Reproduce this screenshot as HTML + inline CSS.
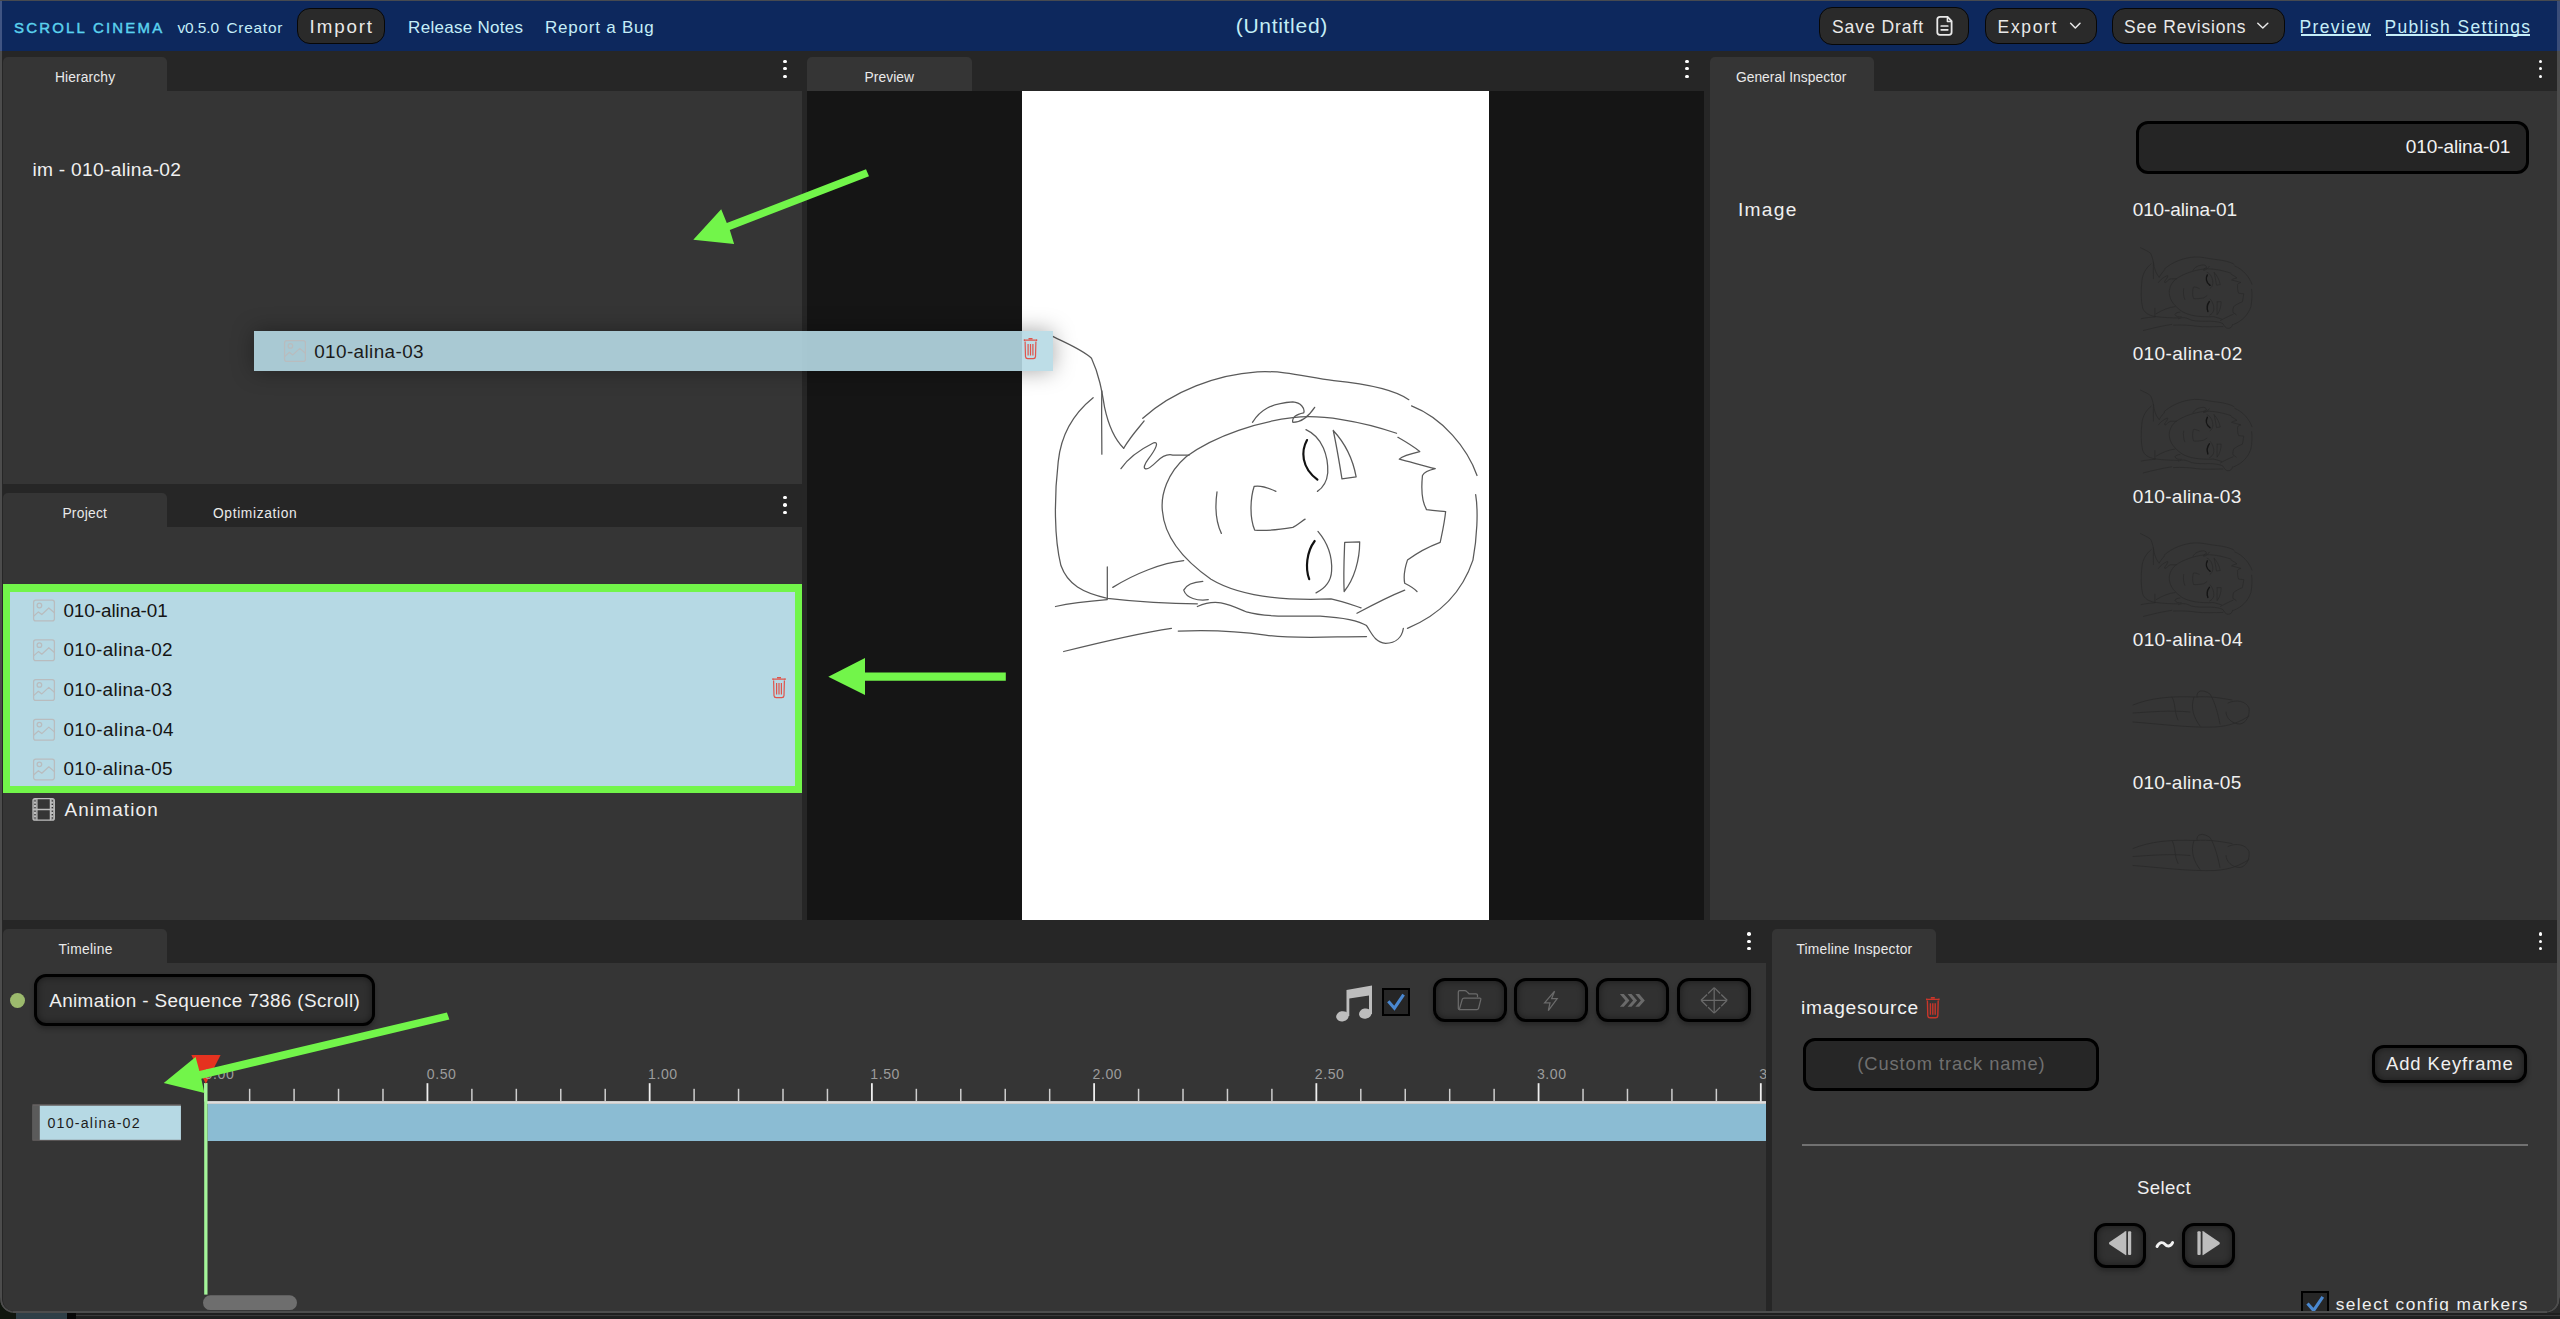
<!DOCTYPE html>
<html><head><meta charset="utf-8"><title>Scroll Cinema</title>
<style>
*{margin:0;padding:0;box-sizing:border-box}
html,body{width:2560px;height:1319px;overflow:hidden;background:#1d1d1d;font-family:"Liberation Sans",sans-serif}
.a{position:absolute}
.t{position:absolute;white-space:pre;line-height:0}
.tab{position:absolute;background:#353535;border-radius:5px 5px 0 0}
.pn{position:absolute;background:#353535}
.dot{position:absolute;width:3.6px;height:3.6px;border-radius:50%;background:#fff}
.hb{position:absolute;background:#2a2a2a;border:1.6px solid #070707;border-radius:13px}
.tb{position:absolute;background:#313131;border:3px solid #000;border-radius:12px;box-shadow:inset 0 0 7px rgba(0,0,0,.45),0 3px 5px rgba(0,0,0,.28)}
svg{position:absolute;overflow:visible}
</style></head>
<body>
<!-- desktop strip at bottom -->
<div class="a" style="left:0;top:1300px;width:2560px;height:19px;background:#202020"></div>
<div class="a" style="left:45px;top:1313px;width:2515px;height:2px;background:#3a3a3a;border-radius:10px 0 0 0"></div>
<div class="a" style="left:16px;top:1312px;width:52px;height:7px;background:#2a3a44"></div>
<div class="a" style="left:0;top:1312px;width:16px;height:7px;background:#1a2418"></div>
<!-- window -->
<div class="a" style="left:0;top:0;width:2560px;height:1312px;background:#262626;border-radius:0 0 13px 13px;border:1px solid #4c4c4c;border-left-width:2px;border-right-width:3px;border-top-color:#474a50"></div>
<!-- header -->
<div class="a" style="left:2px;top:1px;width:2555px;height:50px;background:#0d285d"></div>
<div class="a" style="left:0;top:1px;width:2px;height:50px;background:#405583"></div>
<div class="a" style="left:2557px;top:1px;width:3px;height:50px;background:#3a4d78"></div>
<div class="hb" style="left:297px;top:8px;width:88px;height:36px"></div>
<div class="hb" style="left:1819px;top:7px;width:150px;height:37.5px"></div>
<div class="hb" style="left:1984.5px;top:8.3px;width:112px;height:35.5px"></div>
<div class="hb" style="left:2112px;top:8px;width:173px;height:36px"></div>
<div class="a" style="left:2300.5px;top:34px;width:70px;height:1.6px;background:#c5eef8"></div>
<div class="a" style="left:2385.5px;top:34px;width:144.5px;height:1.6px;background:#c5eef8"></div>
<svg style="left:0;top:0" width="2560" height="51">
 <g fill="none" stroke="#e9e9e9" stroke-width="1.8" stroke-linejoin="round" stroke-linecap="round">
  <path d="M1947.6 16.9 H1940 Q1937.3 16.9 1937.3 19.6 V32.3 Q1937.3 34.8 1940 34.8 H1949 Q1951.6 34.8 1951.6 32.3 V21.1 Z"/>
  <path d="M1947.4 17.3 V21.6 H1951.3" stroke-width="1.5"/>
  <path d="M1941.2 26 H1947.8 M1941.2 29.8 H1947.8" stroke-width="1.7"/>
  <path d="M2070.6 23.3 L2075.3 28 L2080 23.3" stroke-width="1.5"/>
  <path d="M2257.8 23.3 L2262.8 28 L2267.8 23.3" stroke-width="1.5"/>
 </g>
</svg>

<!-- tabs + panels -->
<div class="tab" style="left:3px;top:57px;width:164px;height:34px"></div>
<div class="pn" style="left:3px;top:91px;width:798.5px;height:393px"></div>
<div class="tab" style="left:3px;top:493px;width:164px;height:34px"></div>
<div class="pn" style="left:3px;top:527px;width:798.5px;height:393px"></div>
<div class="tab" style="left:807px;top:57px;width:165px;height:34px"></div>
<div class="a" style="left:807px;top:91px;width:897px;height:829px;background:#151515"></div>
<div class="a" style="left:1022px;top:91px;width:467px;height:829px;background:#fff"></div>
<div class="tab" style="left:1710px;top:57px;width:164px;height:34px"></div>
<div class="pn" style="left:1710px;top:91px;width:847px;height:829px"></div>
<div class="tab" style="left:3px;top:929px;width:164px;height:34px"></div>
<div class="pn" style="left:3px;top:963px;width:1763px;height:348px;border-radius:0 0 0 11px"></div>
<div class="tab" style="left:1772px;top:929px;width:164px;height:34px"></div>
<div class="pn" style="left:1772px;top:963px;width:785px;height:348px;border-radius:0 0 11px 0"></div>

<!-- dots -->
<div class="dot" style="left:783.4px;top:59.6px"></div><div class="dot" style="left:783.4px;top:66.9px"></div><div class="dot" style="left:783.4px;top:74.5px"></div>
<div class="dot" style="left:783.4px;top:495.8px"></div><div class="dot" style="left:783.4px;top:503.2px"></div><div class="dot" style="left:783.4px;top:510.7px"></div>
<div class="dot" style="left:1685.2px;top:59.6px"></div><div class="dot" style="left:1685.2px;top:66.9px"></div><div class="dot" style="left:1685.2px;top:74.5px"></div>
<div class="dot" style="left:2538.6px;top:59.6px"></div><div class="dot" style="left:2538.6px;top:66.9px"></div><div class="dot" style="left:2538.6px;top:74.5px"></div>
<div class="dot" style="left:1747.4px;top:932.2px"></div><div class="dot" style="left:1747.4px;top:939.6px"></div><div class="dot" style="left:1747.4px;top:946.8px"></div>
<div class="dot" style="left:2538.7px;top:932.2px"></div><div class="dot" style="left:2538.7px;top:939.6px"></div><div class="dot" style="left:2538.7px;top:946.8px"></div>

<!-- preview sketch -->
<svg style="left:0;top:0" width="2560" height="1000">
 <defs>
  <g id="sk">
<path d="M1380 415 C1250 370 1100 345 1000 358 C880 372 720 420 610 500 C540 560 515 640 522 700 C530 800 600 880 700 950 C800 1010 950 1030 1140 1022 C1180 1030 1220 1045 1250 1055"/>
<path d="M450 360 C560 260 720 200 870 190 C980 185 1050 210 1150 222 C1280 235 1380 260 1425 292"/>
<path d="M1435 315 C1550 360 1640 470 1675 570"/>
<path d="M1670 640 C1680 700 1675 800 1660 880 C1620 1000 1540 1080 1420 1130"/>
<path d="M268 285 C200 340 150 420 140 520 C125 650 125 800 150 900 C175 970 230 1000 320 1020 C450 1035 560 1040 650 1040"/>
<path d="M120 60 C180 90 230 110 262 140 C290 200 300 260 310 320 C325 390 350 440 380 470"/>
<path d="M300 260 C298 340 300 420 300 492"/>
<path d="M380 470 C410 420 440 390 455 370"/>
<path d="M370 545 C400 500 450 470 490 450 C510 445 500 470 470 510 C440 550 460 560 500 520 C520 500 540 490 560 495 L620 495"/>
<path d="M130 1050 C200 1035 260 1030 320 1025"/>
<path d="M160 1215 C300 1180 420 1150 555 1130"/>
<path d="M580 1140 C700 1135 800 1140 900 1155 C1000 1170 1150 1160 1270 1160"/>
<path d="M650 1050 C720 1020 760 1040 830 1070 C900 1090 1000 1085 1100 1085 C1180 1090 1240 1100 1270 1120 C1290 1150 1300 1180 1340 1185 C1380 1185 1400 1160 1405 1130"/>
<path d="M670 958 C640 960 610 970 600 990 C610 1020 650 1030 690 1025"/>
<path d="M320 905 L320 1022"/>
<path d="M340 980 C420 930 520 890 600 882"/>
<path d="M1048 402 C1110 430 1130 500 1128 560 C1125 590 1110 615 1090 628"/>
<path d="M1148 405 C1190 450 1220 510 1232 575 L1180 582 C1170 520 1160 460 1148 405"/>
<path d="M1092 775 C1130 820 1145 870 1142 920 C1140 960 1115 985 1085 1000"/>
<path d="M1190 815 L1245 813 C1245 880 1225 950 1188 995 C1185 930 1188 870 1190 815"/>
<path d="M938 628 C910 615 880 605 858 610 C845 650 840 720 860 770 C900 775 950 768 1000 760 C1020 750 1035 735 1045 730"/>
<path d="M722 630 C715 680 718 740 738 782"/>
<path d="M852 375 C880 330 920 305 1000 300 C1030 302 1045 325 1040 340 C1010 345 995 360 1000 375 C1030 375 1060 350 1080 320"/>
<path d="M1385 430 C1420 450 1450 470 1465 482 C1430 490 1400 500 1390 510 C1430 520 1480 535 1522 545 C1500 550 1480 560 1475 570 C1470 620 1475 670 1490 695 C1520 700 1545 700 1560 702 C1555 750 1545 790 1540 815 C1500 830 1460 850 1420 880 C1410 910 1405 940 1410 965 C1430 975 1450 990 1455 995"/>
<path d="M1235 1075 C1300 1040 1360 1010 1410 990"/>
</g>
  <g id="eyes">
<path d="M1052 440 C1030 480 1030 540 1090 585"/>
<path d="M1080 810 C1050 850 1045 910 1060 950"/>
</g>
 </defs>
 <g transform="translate(1020 320) scale(0.27285)" fill="none" stroke-linecap="round" stroke-linejoin="round">
  <use href="#sk" stroke="#5a5a5a" stroke-width="4.6"/>
  <use href="#eyes" stroke="#111" stroke-width="8"/>
 </g>
</svg>
<!-- project list -->
<div class="a" style="left:3px;top:584px;width:798.5px;height:209px;background:#b6d9e4;border:7.3px solid #72f54a;border-top-width:8px"></div>
<svg style="left:0;top:0" width="810" height="830">
 <defs>
  <g id="imgic" fill="none" stroke="#b9bcbe" stroke-width="1.25">
   <rect x="0.6" y="0.6" width="20.8" height="20.8" rx="2.2"/>
   <circle cx="6.4" cy="5.9" r="2.3"/>
   <path d="M0.6 16.6 L5.4 12.3 L8.8 14.9 L15.8 8.4 L21.4 13.2" stroke-linejoin="round"/>
  </g>
  <g id="trash" fill="none" stroke="#e0544b" stroke-width="1.2">
   <path d="M0.4 2.2 H13.6 M5 0.6 H9 M0.9 1.2 V3 M13.1 1.2 V3" />
   <path d="M1.6 3.4 L2 18.6 Q2.2 20.6 4.2 20.6 H9.8 Q11.8 20.6 12 18.6 L12.4 3.4"/>
   <path d="M4.6 6 V17.6 M7 6 V17.6 M9.4 6 V17.6"/>
  </g>
 </defs>
 <use href="#imgic" x="33" y="599.6"/>
 <use href="#imgic" x="33" y="639.3"/>
 <use href="#imgic" x="33" y="679"/>
 <use href="#imgic" x="33" y="718.7"/>
 <use href="#imgic" x="33" y="758.4"/>
 <use href="#trash" x="772" y="677"/>
 <g fill="none" stroke="#bdbdbd" stroke-width="1.3">
  <rect x="33" y="798.6" width="21.3" height="21.6" rx="2"/>
  <path d="M36.9 798.6 V820.2 M50.4 798.6 V820.2 M33 809.5 H54.3"/>
 </g>
 <g fill="#bdbdbd">
  <rect x="33.6" y="799.2" width="2.7" height="20.4"/>
  <rect x="51" y="799.2" width="2.7" height="20.4"/>
 </g>
 <g fill="#353535">
  <rect x="34.3" y="800.2" width="1.4" height="1.4"/><rect x="34.3" y="803.6" width="1.4" height="1.4"/><rect x="34.3" y="807" width="1.4" height="1.4"/><rect x="34.3" y="810.5" width="1.4" height="1.4"/><rect x="34.3" y="814" width="1.4" height="1.4"/><rect x="34.3" y="817.3" width="1.4" height="1.4"/>
  <rect x="51.6" y="800.2" width="1.4" height="1.4"/><rect x="51.6" y="803.6" width="1.4" height="1.4"/><rect x="51.6" y="807" width="1.4" height="1.4"/><rect x="51.6" y="810.5" width="1.4" height="1.4"/><rect x="51.6" y="814" width="1.4" height="1.4"/><rect x="51.6" y="817.3" width="1.4" height="1.4"/>
 </g>
</svg>
<!-- hierarchy dragged item -->
<div class="a" style="left:254px;top:331px;width:798.5px;height:39.6px;background:rgba(182,217,228,.9);box-shadow:0 0 22px rgba(0,0,0,.35);z-index:30"></div>
<svg style="left:0;top:0;z-index:31" width="1060" height="380">
 <use href="#imgic" x="284" y="340"/>
 <use href="#trash" x="1023.5" y="338"/>
</svg>
<!-- general inspector -->
<div class="a" style="left:2135.5px;top:121px;width:393px;height:52.5px;background:#252525;border:3px solid #000;border-radius:12px"></div>
<svg style="left:0;top:0" width="2560" height="1000">
<g transform="translate(2131.9 243.4) scale(0.0717)" fill="none" stroke-linecap="round" stroke-linejoin="round">
  <use href="#sk" stroke="#2a2a2a" stroke-width="10.5"/>
  <use href="#eyes" stroke="#151515" stroke-width="20"/>
 </g>
<g transform="translate(2131.9 385.8) scale(0.0717)" fill="none" stroke-linecap="round" stroke-linejoin="round">
  <use href="#sk" stroke="#2a2a2a" stroke-width="10.5"/>
  <use href="#eyes" stroke="#151515" stroke-width="20"/>
 </g>
<g transform="translate(2131.9 529.3) scale(0.0717)" fill="none" stroke-linecap="round" stroke-linejoin="round">
  <use href="#sk" stroke="#2a2a2a" stroke-width="10.5"/>
  <use href="#eyes" stroke="#151515" stroke-width="20"/>
 </g>
<g fill="none" stroke="#2a2a2a" stroke-width="0.9" stroke-linecap="round">
  <path d="M2133 705 C2150 698 2170 696 2195 697 C2210 696 2220 698 2232 700"/>
  <path d="M2133 713 C2150 712 2170 710 2190 712"/>
  <path d="M2133 722 C2160 724 2190 728 2215 727 C2230 726 2240 722 2249 716"/>
  <path d="M2172 697 C2176 704 2174 712 2178 720"/>
  <path d="M2194 697 C2190 708 2194 718 2200 726"/>
  <path d="M2197 697 C2196 690 2203 689 2210 694 C2215 702 2218 714 2220 724"/>
  <path d="M2228 703 C2236 699 2246 701 2249 708 C2250 716 2246 723 2240 724 C2232 724 2226 718 2226 712"/>
 </g>
<g transform="translate(0 143.5)" fill="none" stroke="#2a2a2a" stroke-width="0.9" stroke-linecap="round">
  <path d="M2133 705 C2150 698 2170 696 2195 697 C2210 696 2220 698 2232 700"/>
  <path d="M2133 713 C2150 712 2170 710 2190 712"/>
  <path d="M2133 722 C2160 724 2190 728 2215 727 C2230 726 2240 722 2249 716"/>
  <path d="M2172 697 C2176 704 2174 712 2178 720"/>
  <path d="M2194 697 C2190 708 2194 718 2200 726"/>
  <path d="M2197 697 C2196 690 2203 689 2210 694 C2215 702 2218 714 2220 724"/>
  <path d="M2228 703 C2236 699 2246 701 2249 708 C2250 716 2246 723 2240 724 C2232 724 2226 718 2226 712"/>
 </g>
</svg>
<!-- timeline -->
<div class="a" style="left:10.1px;top:993px;width:15px;height:15px;border-radius:50%;background:#9cba6d"></div>
<div class="tb" style="left:34.4px;top:974.2px;width:340.6px;height:51.6px;background:#2f2f2f"></div>
<div class="tb" style="left:1432.8px;top:978.4px;width:73.8px;height:44px"></div>
<div class="tb" style="left:1514px;top:978.4px;width:73.6px;height:44px"></div>
<div class="tb" style="left:1595.8px;top:978.4px;width:73.5px;height:44px"></div>
<div class="tb" style="left:1677px;top:978.4px;width:73.8px;height:44px"></div>
<div class="a" style="left:1382px;top:988px;width:28.3px;height:27.9px;border:2.9px solid #000;background:#262626"></div>
<svg style="left:0;top:0" width="1800" height="1320">
 <!-- music note -->
 <g fill="#bdbdbd">
  <path d="M1346.5 990 L1372 985.6 L1372 1014 L1369 1014 L1369 995.5 L1349.3 998.6 L1349.3 1016 L1346.5 1016 Z"/>
  <ellipse cx="1342.4" cy="1016.3" rx="6.3" ry="5.1" transform="rotate(-12 1342.4 1016.3)"/>
  <ellipse cx="1365.3" cy="1013.6" rx="6.3" ry="5.1" transform="rotate(-12 1365.3 1013.6)"/>
 </g>
 <path d="M1388.3 1001.3 L1394.4 1008.2 L1403.6 994.7" fill="none" stroke="#4a88d0" stroke-width="3.1" stroke-linejoin="miter"/>
 <!-- folder -->
 <g fill="none" stroke="#6b6b6b" stroke-width="1.25" stroke-linejoin="round">
  <path d="M1459.5 1009.6 Q1458.3 1009.6 1458.3 1008.4 V992.1 Q1458.3 990.7 1459.7 990.7 H1464.7 Q1466 990.7 1466.8 991.6 L1469 993.8 H1476 Q1477.5 993.8 1477.5 995.3 V997.3"/>
  <path d="M1459.3 1009.6 L1462.3 999.2 Q1462.7 998 1464 998 H1479.6 Q1481.1 998 1480.8 999.4 L1478.5 1008.6 Q1478.1 1009.6 1477 1009.6 Z"/>
 </g>
 <!-- bolt -->
 <path d="M1554.6 991.2 L1544.6 1002.8 H1550 L1548.3 1010.6 L1557.2 998.6 H1551.6 Z" fill="none" stroke="#6b6b6b" stroke-width="1.25" stroke-linejoin="miter"/>
 <!-- >>> -->
 <g fill="#6a6a6a">
  <path d="M1619.9 994.1 H1623.8 L1629.4 1000.5 L1623.8 1006.8 H1619.9 L1625.4 1000.5 Z"/>
  <path d="M1627.6 994.1 H1631.5 L1637.1 1000.5 L1631.5 1006.8 H1627.6 L1633.1 1000.5 Z"/>
  <path d="M1635.3 994.1 H1639.2 L1644.8 1000.5 L1639.2 1006.8 H1635.3 L1640.8 1000.5 Z"/>
 </g>
 <!-- move -->
 <g fill="none" stroke="#696969" stroke-width="1.25">
  <path d="M1714.2 988.2 V1012.6 M1701.6 1000.3 H1726.6"/>
  <path d="M1714.20 987.60 L1708.13 993.44 M1714.20 987.60 L1720.18 993.44 M1714.20 1013.10 L1708.13 1007.21 M1714.20 1013.10 L1720.18 1007.21 M1701.00 1000.30 L1707.07 994.46 M1701.00 1000.30 L1707.07 1006.19 M1727.20 1000.30 L1721.22 994.46 M1727.20 1000.30 L1721.22 1006.19"/>
 </g>
 <!-- ruler -->
 <rect x="205.2" y="1101.1" width="1560.8" height="2.8" fill="#dedede"/>
 <rect x="204.30" y="1083.2" width="1.8" height="18.3" fill="#efefef"/>
 <rect x="248.90" y="1088.8" width="1.5" height="12.7" fill="#cdcdcd"/>
 <rect x="293.34" y="1088.8" width="1.5" height="12.7" fill="#cdcdcd"/>
 <rect x="337.79" y="1088.8" width="1.5" height="12.7" fill="#cdcdcd"/>
 <rect x="382.23" y="1088.8" width="1.5" height="12.7" fill="#cdcdcd"/>
 <rect x="426.53" y="1083.2" width="1.8" height="18.3" fill="#efefef"/>
 <rect x="471.13" y="1088.8" width="1.5" height="12.7" fill="#cdcdcd"/>
 <rect x="515.57" y="1088.8" width="1.5" height="12.7" fill="#cdcdcd"/>
 <rect x="560.02" y="1088.8" width="1.5" height="12.7" fill="#cdcdcd"/>
 <rect x="604.46" y="1088.8" width="1.5" height="12.7" fill="#cdcdcd"/>
 <rect x="648.76" y="1083.2" width="1.8" height="18.3" fill="#efefef"/>
 <rect x="693.36" y="1088.8" width="1.5" height="12.7" fill="#cdcdcd"/>
 <rect x="737.80" y="1088.8" width="1.5" height="12.7" fill="#cdcdcd"/>
 <rect x="782.25" y="1088.8" width="1.5" height="12.7" fill="#cdcdcd"/>
 <rect x="826.69" y="1088.8" width="1.5" height="12.7" fill="#cdcdcd"/>
 <rect x="870.99" y="1083.2" width="1.8" height="18.3" fill="#efefef"/>
 <rect x="915.59" y="1088.8" width="1.5" height="12.7" fill="#cdcdcd"/>
 <rect x="960.03" y="1088.8" width="1.5" height="12.7" fill="#cdcdcd"/>
 <rect x="1004.48" y="1088.8" width="1.5" height="12.7" fill="#cdcdcd"/>
 <rect x="1048.92" y="1088.8" width="1.5" height="12.7" fill="#cdcdcd"/>
 <rect x="1093.22" y="1083.2" width="1.8" height="18.3" fill="#efefef"/>
 <rect x="1137.82" y="1088.8" width="1.5" height="12.7" fill="#cdcdcd"/>
 <rect x="1182.26" y="1088.8" width="1.5" height="12.7" fill="#cdcdcd"/>
 <rect x="1226.71" y="1088.8" width="1.5" height="12.7" fill="#cdcdcd"/>
 <rect x="1271.15" y="1088.8" width="1.5" height="12.7" fill="#cdcdcd"/>
 <rect x="1315.45" y="1083.2" width="1.8" height="18.3" fill="#efefef"/>
 <rect x="1360.05" y="1088.8" width="1.5" height="12.7" fill="#cdcdcd"/>
 <rect x="1404.49" y="1088.8" width="1.5" height="12.7" fill="#cdcdcd"/>
 <rect x="1448.94" y="1088.8" width="1.5" height="12.7" fill="#cdcdcd"/>
 <rect x="1493.38" y="1088.8" width="1.5" height="12.7" fill="#cdcdcd"/>
 <rect x="1537.68" y="1083.2" width="1.8" height="18.3" fill="#efefef"/>
 <rect x="1582.28" y="1088.8" width="1.5" height="12.7" fill="#cdcdcd"/>
 <rect x="1626.72" y="1088.8" width="1.5" height="12.7" fill="#cdcdcd"/>
 <rect x="1671.17" y="1088.8" width="1.5" height="12.7" fill="#cdcdcd"/>
 <rect x="1715.61" y="1088.8" width="1.5" height="12.7" fill="#cdcdcd"/>
 <rect x="1759.91" y="1083.2" width="1.8" height="18.3" fill="#efefef"/>
 <rect x="207.5" y="1104" width="1558.5" height="37" fill="#8bbcd3"/>
 <!-- clip -->
 <rect x="32.4" y="1104.3" width="148.5" height="36.4" fill="#6a6464"/>
 <rect x="32.4" y="1105.6" width="7.4" height="34.2" fill="#5b5b5b"/>
 <rect x="39.8" y="1105.8" width="141.1" height="34" fill="#b6d9e4"/>
 <!-- playhead -->
 <rect x="204.2" y="1083" width="3.3" height="211.6" fill="#a4f59a"/>
 <path d="M191.3 1055 H220.6 L205.8 1083.8 Z" fill="#e5321f"/>
 <rect x="203" y="1295.3" width="94" height="14.8" rx="7.4" fill="#6e6e6e"/>
</svg>
<div class="a" style="left:1766px;top:963px;width:6px;height:348px;background:#262626;z-index:8"></div>
<!-- timeline inspector -->
<div class="a" style="left:1803.3px;top:1038px;width:295.5px;height:52.7px;background:#262626;border:3px solid #000;border-radius:12px"></div>
<div class="tb" style="left:2371.5px;top:1045px;width:155.3px;height:37.5px;background:#303030"></div>
<div class="a" style="left:1801.5px;top:1144px;width:726.3px;height:2px;background:#717171"></div>
<div class="tb" style="left:2093.5px;top:1223px;width:52.2px;height:45px"></div>
<div class="tb" style="left:2182.2px;top:1223px;width:52.7px;height:45px"></div>
<div class="a" style="left:2301.4px;top:1291px;width:28.1px;height:28px;border:2.9px solid #000;background:#262626"></div>
<svg style="left:0;top:0" width="2560" height="1320">
 <g transform="translate(1925.8 997.2) scale(1.0 1.0)">
  <g fill="none" stroke="#c9362a" stroke-width="1.4">
   <path d="M0.4 2.2 H13.6 M5 0.6 H9 M0.9 1.2 V3 M13.1 1.2 V3" />
   <path d="M1.6 3.4 L2 18.6 Q2.2 20.6 4.2 20.6 H9.8 Q11.8 20.6 12 18.6 L12.4 3.4"/>
   <path d="M4.6 6 V17.6 M7 6 V17.6 M9.4 6 V17.6"/>
  </g>
 </g>
 <g fill="#bdbdbd">
  <path d="M2126.3 1231.5 Q2126.3 1230.8 2125.5 1231.3 L2109.3 1242.2 Q2108.6 1243.2 2109.3 1244.2 L2125.5 1255 Q2126.3 1255.5 2126.3 1254.8 Z"/>
  <rect x="2128" y="1231.3" width="3.2" height="23.8" rx="1"/>
  <path d="M2202.5 1231.5 Q2202.5 1230.8 2203.3 1231.3 L2219.5 1242.2 Q2220.2 1243.2 2219.5 1244.2 L2203.3 1255 Q2202.5 1255.5 2202.5 1254.8 Z"/>
  <rect x="2197.4" y="1231.3" width="3.3" height="23.8" rx="1"/>
 </g>
 <path d="M2157 1246.5 C2159.5 1241.5 2163 1242 2165 1244.3 C2167 1246.6 2170.5 1247 2172.6 1242.6" fill="none" stroke="#f2f2f2" stroke-width="2.9" stroke-linecap="round"/>
 <path d="M2307.5 1303.5 L2313.6 1310.4 L2322.8 1296.9" fill="none" stroke="#4a88d0" stroke-width="3.1"/>
</svg>
<!-- annotation arrows -->
<svg style="left:0;top:0;z-index:40" width="2560" height="1320">
 <g fill="#72f54a">
  <path d="M866 169.3 L869 176.2 L729.8 229.9 L734.1 244.1 L693.3 239.8 L721.2 209.3 L726.8 223 Z"/>
  <path d="M1005.8 672.5 V680.8 H865 V695 L828.3 676.7 L865 658 V672.5 Z"/>
  <path d="M446.9 1012.5 L449.4 1019.4 L201.3 1078.8 L204.4 1093.1 L163.75 1083.1 L195.6 1056.9 L199.4 1071 Z"/>
 </g>
</svg>
<div class="a" style="left:0;top:1312.6px;width:2560px;height:7px;background:#1f1f1f;z-index:45"></div>
<div class="a" style="left:0;top:1310.6px;width:2560px;height:1px;background:#262626;z-index:44;border-radius:0 0 13px 13px"></div>
<div class="a" style="left:13px;top:1311.4px;width:2534px;height:1.4px;background:#4d4d4d;z-index:46"></div>
<div class="a" style="left:75px;top:1314.6px;width:2485px;height:1.5px;background:#3a3a3a;z-index:46;border-radius:8px 0 0 0"></div>
<div class="a" style="left:16px;top:1313px;width:51px;height:6px;background:#2f3f47;z-index:46"></div>
<div class="a" style="left:67px;top:1313px;width:9px;height:6px;background:#080808;z-index:46"></div>
<svg style="left:0;top:0;z-index:47" width="2560" height="1319">
 <path d="M0 1297 V1319 H16 V1313 H13.5 A13 13 0 0 1 0.5 1299 Z" fill="#10160e"/>
 <path d="M1 1297 V1299 A13 13 0 0 0 13.5 1312.1 H16" fill="none" stroke="#4d4d4d" stroke-width="1.4"/>
 <path d="M2560 1297 V1313 H2546 A13 13 0 0 0 2559 1299 Z" fill="#2a2a2a"/>
 <path d="M2558.6 1297 V1299 A13 13 0 0 1 2546 1312.1 H2540" fill="none" stroke="#4d4d4d" stroke-width="1.4"/>
</svg>
<div class="t" style="left:14.00px;top:28.11px;font-size:14.97px;letter-spacing:2.208px;color:#5bd2ee;z-index:5;-webkit-text-stroke:0.45px #5bd2ee;">SCROLL CINEMA</div>
<div class="t" style="left:177.50px;top:28.46px;font-size:15.41px;letter-spacing:-0.100px;color:#c5eef8;z-index:5;">v0.5.0</div>
<div class="t" style="left:226.40px;top:28.46px;font-size:15.41px;letter-spacing:0.767px;color:#c5eef8;z-index:5;">Creator</div>
<div class="t" style="left:309.60px;top:26.80px;font-size:18.75px;letter-spacing:1.860px;color:#e9e9e9;z-index:5;">Import</div>
<div class="t" style="left:408.10px;top:27.61px;font-size:17.01px;letter-spacing:0.283px;color:#c5eef8;z-index:5;">Release Notes</div>
<div class="t" style="left:545.00px;top:27.61px;font-size:17.01px;letter-spacing:0.782px;color:#c5eef8;z-index:5;">Report a Bug</div>
<div class="t" style="left:1235.70px;top:26.00px;font-size:21.08px;letter-spacing:0.678px;color:#c3edf6;z-index:5;">(Untitled)</div>
<div class="t" style="left:1832.00px;top:26.51px;font-size:17.59px;letter-spacing:0.889px;color:#e9e9e9;z-index:5;">Save Draft</div>
<div class="t" style="left:1997.60px;top:26.66px;font-size:17.44px;letter-spacing:1.680px;color:#e9e9e9;z-index:5;">Export</div>
<div class="t" style="left:2124.00px;top:26.66px;font-size:17.44px;letter-spacing:0.833px;color:#e9e9e9;z-index:5;">See Revisions</div>
<div class="t" style="left:2299.40px;top:26.66px;font-size:17.44px;letter-spacing:1.433px;color:#c5eef8;z-index:5;">Preview</div>
<div class="t" style="left:2384.40px;top:26.66px;font-size:17.44px;letter-spacing:1.373px;color:#c5eef8;z-index:5;">Publish Settings</div>
<div class="t" style="left:55.00px;top:76.51px;font-size:13.81px;letter-spacing:0.125px;color:#eaeaea;z-index:5;">Hierarchy</div>
<div class="t" style="left:864.40px;top:76.61px;font-size:13.81px;letter-spacing:0.100px;color:#eaeaea;z-index:5;">Preview</div>
<div class="t" style="left:1735.90px;top:76.81px;font-size:13.81px;letter-spacing:0.050px;color:#eaeaea;z-index:5;">General Inspector</div>
<div class="t" style="left:62.40px;top:512.91px;font-size:13.81px;letter-spacing:0.267px;color:#eaeaea;z-index:5;">Project</div>
<div class="t" style="left:213.00px;top:512.91px;font-size:13.81px;letter-spacing:0.636px;color:#eaeaea;z-index:5;">Optimization</div>
<div class="t" style="left:58.60px;top:948.81px;font-size:13.81px;letter-spacing:0.300px;color:#eaeaea;z-index:5;">Timeline</div>
<div class="t" style="left:1796.40px;top:949.11px;font-size:13.81px;letter-spacing:0.212px;color:#eaeaea;z-index:5;">Timeline Inspector</div>
<div class="t" style="left:32.40px;top:170.05px;font-size:19.19px;letter-spacing:0.287px;color:#f0f0f0;z-index:5;">im - 010-alina-02</div>
<div class="t" style="left:314.20px;top:351.55px;font-size:18.9px;letter-spacing:0.400px;color:#1b1b1b;z-index:31;">010-alina-03</div>
<div class="t" style="left:63.40px;top:610.55px;font-size:18.9px;letter-spacing:-0.055px;color:#151515;z-index:5;">010-alina-01</div>
<div class="t" style="left:63.40px;top:650.35px;font-size:18.9px;letter-spacing:0.382px;color:#151515;z-index:5;">010-alina-02</div>
<div class="t" style="left:63.40px;top:689.95px;font-size:18.9px;letter-spacing:0.345px;color:#151515;z-index:5;">010-alina-03</div>
<div class="t" style="left:63.40px;top:730.05px;font-size:18.9px;letter-spacing:0.473px;color:#151515;z-index:5;">010-alina-04</div>
<div class="t" style="left:63.40px;top:769.35px;font-size:18.9px;letter-spacing:0.382px;color:#151515;z-index:5;">010-alina-05</div>
<div class="t" style="left:64.40px;top:809.55px;font-size:18.9px;letter-spacing:1.175px;color:#efefef;z-index:5;">Animation</div>
<div class="t" style="left:2405.80px;top:147.20px;font-size:19.04px;letter-spacing:-0.118px;color:#f2f2f2;z-index:5;">010-alina-01</div>
<div class="t" style="left:1738.00px;top:210.35px;font-size:19.19px;letter-spacing:1.250px;color:#efefef;z-index:5;">Image</div>
<div class="t" style="left:2132.70px;top:210.10px;font-size:19.04px;letter-spacing:-0.127px;color:#f0f0f0;z-index:5;">010-alina-01</div>
<div class="t" style="left:2132.70px;top:353.60px;font-size:19.04px;letter-spacing:0.345px;color:#f0f0f0;z-index:5;">010-alina-02</div>
<div class="t" style="left:2132.70px;top:497.10px;font-size:19.04px;letter-spacing:0.255px;color:#f0f0f0;z-index:5;">010-alina-03</div>
<div class="t" style="left:2132.70px;top:639.80px;font-size:19.04px;letter-spacing:0.364px;color:#f0f0f0;z-index:5;">010-alina-04</div>
<div class="t" style="left:2132.70px;top:783.20px;font-size:19.04px;letter-spacing:0.255px;color:#f0f0f0;z-index:5;">010-alina-05</div>
<div class="t" style="left:49.20px;top:1000.55px;font-size:18.9px;letter-spacing:0.376px;color:#f0f0f0;z-index:5;">Animation - Sequence 7386 (Scroll)</div>
<div class="t" style="left:426.83px;top:1073.81px;font-size:14.1px;letter-spacing:0.567px;color:#9c9c9c;z-index:6;">0.50</div>
<div class="t" style="left:204.60px;top:1073.81px;font-size:14.1px;letter-spacing:0.567px;color:#9c9c9c;z-index:6;">0.00</div>
<div class="t" style="left:648.06px;top:1073.81px;font-size:14.1px;letter-spacing:0.567px;color:#9c9c9c;z-index:6;">1.00</div>
<div class="t" style="left:870.29px;top:1073.81px;font-size:14.1px;letter-spacing:0.567px;color:#9c9c9c;z-index:6;">1.50</div>
<div class="t" style="left:1092.52px;top:1073.81px;font-size:14.1px;letter-spacing:0.567px;color:#9c9c9c;z-index:6;">2.00</div>
<div class="t" style="left:1314.75px;top:1073.81px;font-size:14.1px;letter-spacing:0.567px;color:#9c9c9c;z-index:6;">2.50</div>
<div class="t" style="left:1536.98px;top:1073.81px;font-size:14.1px;letter-spacing:0.567px;color:#9c9c9c;z-index:6;">3.00</div>
<div class="t" style="left:1759.21px;top:1073.81px;font-size:14.1px;letter-spacing:0.567px;color:#9c9c9c;z-index:6;">3</div>
<div class="t" style="left:47.50px;top:1122.97px;font-size:14.24px;letter-spacing:1.182px;color:#1d1d1d;z-index:5;">010-alina-02</div>
<div class="t" style="left:1801.00px;top:1008.05px;font-size:19.2px;letter-spacing:0.740px;color:#f2f2f2;z-index:5;">imagesource</div>
<div class="t" style="left:1857.30px;top:1064.06px;font-size:18.31px;letter-spacing:0.922px;color:#707070;z-index:5;">(Custom track name)</div>
<div class="t" style="left:2386.00px;top:1064.40px;font-size:18.46px;letter-spacing:0.909px;color:#f0f0f0;z-index:5;">Add Keyframe</div>
<div class="t" style="left:2136.90px;top:1187.96px;font-size:18.6px;letter-spacing:0.420px;color:#efefef;z-index:5;">Select</div>
<div class="t" style="left:2335.80px;top:1304.01px;font-size:17.3px;letter-spacing:1.410px;color:#f0f0f0;z-index:5;">select config markers</div>
</body></html>
